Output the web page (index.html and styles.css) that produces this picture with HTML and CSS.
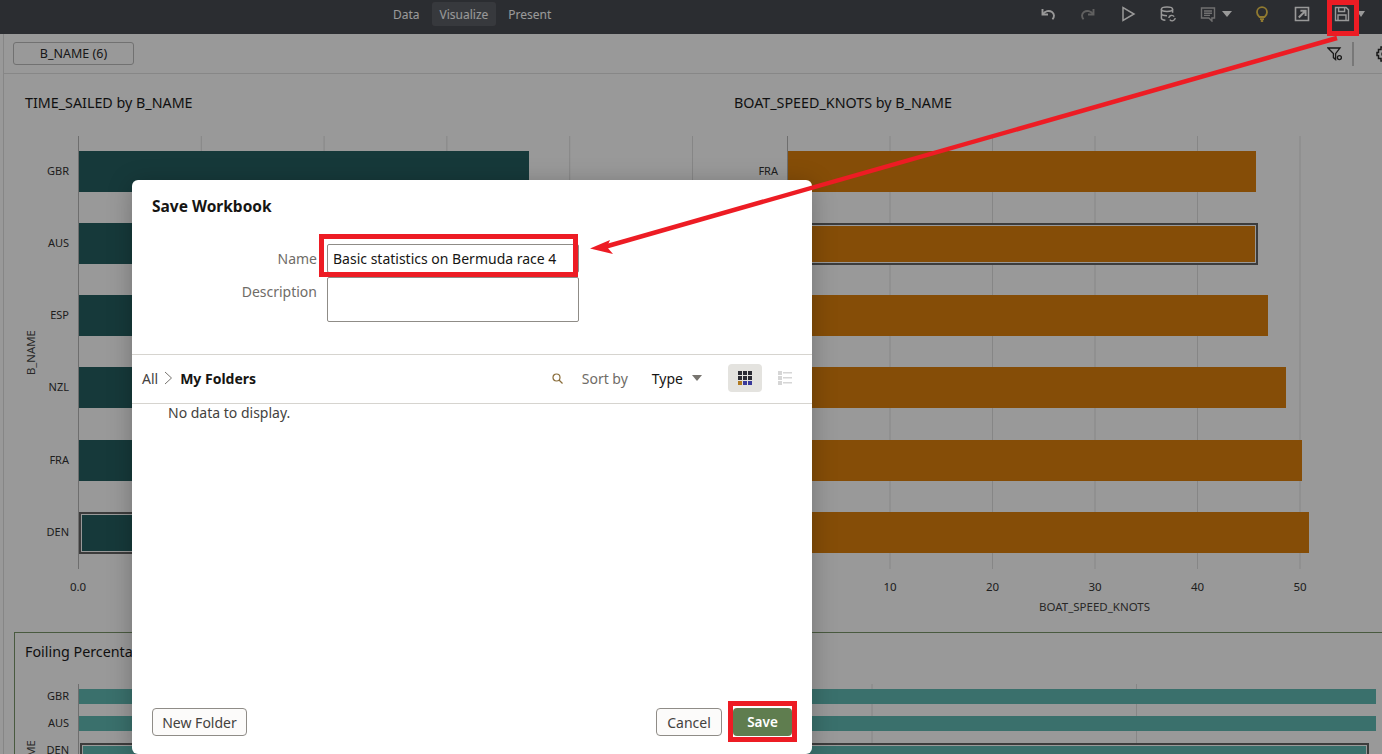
FILE: index.html
```html
<!DOCTYPE html>
<html lang="en">

<head>
    <meta charset="UTF-8">
    <meta name="viewport" content="width=device-width, initial-scale=1.0">
    <title>Save Workbook</title>
    <link rel="stylesheet" href="styles.css">
</head>

<body>
    <header class="topbar">
        <nav class="tabs">
            <a class="tab">Data</a>
            <a class="tab tab-active">Visualize</a>
            <a class="tab">Present</a>
        </nav>
        <div class="tools">
            <span class="tool">
                <svg width="16" height="16" viewBox="0 0 16 16" fill="none" stroke="currentColor" stroke-width="1.9"><path d="M2.500 3v5.500H8"/><path d="M2.800 8.300C5 5 9 4 12 6c2.600 2 2.500 5.300.4 7.200"/></svg>
            </span>
            <span class="tool tool-off">
                <svg width="16" height="16" viewBox="0 0 16 16" fill="none" stroke="currentColor" stroke-width="1.9"><path d="M13.500 3v5.500H8"/><path d="M13.200 8.300C11 5 7 4 4 6c-2.600 2-2.500 5.300-.4 7.200"/></svg>
            </span>
            <span class="tool">
                <svg width="16" height="16" viewBox="0 0 16 16" fill="none" stroke="currentColor" stroke-width="1.500"><path d="M3 1.500v13L14 8z"/></svg>
            </span>
            <span class="tool">
                <svg width="16" height="16" viewBox="0 0 16 16" fill="none" stroke="currentColor" stroke-width="1.500"><ellipse cx="7" cy="3.200" rx="5.600" ry="2.200"/><path d="M1.400 3.200v9c0 1 1.600 1.800 4 2M12.600 3.200v3.600M1.400 7.600c0 1.200 2.400 2.200 5.600 2.200"/><path d="M8.800 12a3 3 0 0 1 5.400-1.400M15.200 12a3 3 0 0 1-5.400 1.600" stroke-width="1.400"/></svg>
            </span>
            <span class="tool tool-menu tool-dim">
                <svg width="16" height="16" viewBox="0 0 16 16" fill="none" stroke="currentColor" stroke-width="1.400"><path d="M1.500 2h13v10h-2.600v3l-3-3H1.500z"/><path d="M4 5h8M4 7.200h8M4 9.400h6"/></svg>
                <i class="caret"></i>
            </span>
            <span class="tool tool-bulb">
                <svg width="16" height="16" viewBox="0 0 16 16" fill="none" stroke="currentColor" stroke-width="1.800"><path d="M5.600 11C4.600 9.800 3 8.800 3 6.200a5 5 0 0 1 10 0c0 2.600-1.600 3.600-2.600 4.800z"/><path d="M6 13.200h4M6.800 15h2.400"/></svg>
            </span>
            <span class="tool">
                <svg width="16" height="16" viewBox="0 0 16 16" fill="none" stroke="currentColor" stroke-width="1.600"><path d="M1.500 1.500h13v13h-13z"/><path d="M4.800 11.500 10.800 5.500M6.400 4.800h5.200v5.200" stroke-width="2"/></svg>
            </span>
            <span class="tool tool-menu tool-save">
                <svg width="16" height="16" viewBox="0 0 16 16" fill="none" stroke="currentColor" stroke-width="1.400"><path d="M1.500 1.500h10.600l2.400 2.400v10.600h-13z"/><path d="M4.600 1.500v4h6v-4M4 14.500V9h8v5.500"/></svg>
                <i class="caret"></i>
            </span>
        </div>
    </header>

    <div class="workspace">
        <div class="filterbar">
            <button class="chip">B_NAME (6)</button>
            <div class="filter-tools">
                <svg class="filter-icon" width="16" height="16" viewBox="0 0 16 16" fill="none" stroke="currentColor" stroke-width="1.300"><path d="M1 2h12L8.600 7.600v6L6.400 11.600V7.600z"/><circle cx="12.400" cy="11.600" r="2"/></svg>
                <span class="filter-sep"></span>
                <svg class="gear-icon" width="16" height="16" viewBox="0 0 16 16" fill="none" stroke="currentColor" stroke-width="1.500"><path d="M5 1h6v2.500h2.500v3H15v3h-1.500v3H11V15H5v-2.500H2.500v-3H1v-3h1.500v-3H5z"/><circle cx="8" cy="8" r="2"/></svg>
            </div>
        </div>

        <div class="charts">
            <section class="chart">
                <h2 class="chart-title">TIME_SAILED by B_NAME</h2>
                <div class="chart-grid">
                    <div class="y-title">B_NAME</div>
                    <div class="y-labels">
                        <span>GBR</span>
                        <span>AUS</span>
                        <span>ESP</span>
                        <span>NZL</span>
                        <span>FRA</span>
                        <span>DEN</span>
                    </div>
                    <div class="plot plot-time">
                        <div class="bar bar-time" style="width: 450px"></div>
                        <div class="bar bar-time" style="width: 450px"></div>
                        <div class="bar bar-time" style="width: 450px"></div>
                        <div class="bar bar-time" style="width: 450px"></div>
                        <div class="bar bar-time" style="width: 450px"></div>
                        <div class="bar bar-time bar-selected" style="width: 450px"></div>
                    </div>
                    <div class="x-ticks ticks-time"><span>0.0</span></div>
                </div>
            </section>

            <section class="chart">
                <h2 class="chart-title">BOAT_SPEED_KNOTS by B_NAME</h2>
                <div class="chart-grid">
                    <div class="y-title">B_NAME</div>
                    <div class="y-labels">
                        <span>FRA</span>
                        <span></span>
                        <span></span>
                        <span></span>
                        <span></span>
                        <span></span>
                    </div>
                    <div class="plot plot-speed">
                        <div class="bar bar-speed" style="width: 468px"></div>
                        <div class="bar bar-speed bar-selected" style="width: 470px"></div>
                        <div class="bar bar-speed" style="width: 480px"></div>
                        <div class="bar bar-speed" style="width: 498px"></div>
                        <div class="bar bar-speed" style="width: 514px"></div>
                        <div class="bar bar-speed" style="width: 521px"></div>
                    </div>
                    <div class="x-ticks ticks-speed">
                        <span>10</span>
                        <span>20</span>
                        <span>30</span>
                        <span>40</span>
                        <span>50</span>
                    </div>
                    <div class="x-title">BOAT_SPEED_KNOTS</div>
                </div>
            </section>
        </div>

        <section class="panel">
            <h2 class="chart-title">Foiling Percentage</h2>
            <div class="chart-grid panel-grid">
                <div class="y-title">B_NAME</div>
                <div class="y-labels">
                    <span>GBR</span>
                    <span>AUS</span>
                    <span>DEN</span>
                </div>
                <div class="plot plot-foiling">
                    <div class="bar bar-foiling" style="width: 1297px"></div>
                    <div class="bar bar-foiling" style="width: 1297px"></div>
                    <div class="bar bar-foiling bar-selected" style="width: 1289px"></div>
                </div>
            </div>
        </section>
    </div>

    <div class="scrim"></div>

    <div class="modal">
        <h1 class="modal-title">Save Workbook</h1>

        <form class="save-form">
            <label for="wbName">Name</label>
            <input type="text" id="wbName" value="Basic statistics on Bermuda race 4">
            <label for="wbDesc">Description</label>
            <textarea id="wbDesc"></textarea>
        </form>

        <div class="folderbar">
            <span class="crumb">All</span>
            <svg class="crumb-sep" width="9" height="14" viewBox="0 0 9 14" fill="none" stroke="currentColor"><path d="M1 1l6.500 6L1 13"/></svg>
            <span class="crumb-current">My Folders</span>
            <svg class="search-icon" width="11" height="11" viewBox="0 0 11 11" fill="none" stroke="currentColor" stroke-width="1.200"><circle cx="4.500" cy="4.500" r="3.500"/><path d="M7 7l3.500 3.500"/></svg>
            <span class="sort-label">Sort by</span>
            <span class="sort-value">Type</span>
            <i class="sort-caret"></i>
            <span class="view-btn view-active">
                <svg width="14" height="14" viewBox="0 0 14 14">
                    <path fill="#2b2b33" d="M0 0h14v14H0z"/>
                    <path fill="#e4e3df" d="M4 0h1v14H4zM9 0h1v14H9zM0 4h14v1H0zM0 9h14v1H0z"/>
                    <path fill="#b07a20" d="M0 10h4v4H0z"/>
                    <path fill="#3a3a9a" d="M5 10h4v4H5zM10 10h4v4h-4z"/>
                </svg>
            </span>
            <span class="view-btn">
                <svg width="14" height="14" viewBox="0 0 14 14" fill="#d6d6d6"><path d="M0 0h4v4H0zM0 5h4v4H0zM0 10h4v4H0zM5 1h9v1.500H5zM5 6h9v1.500H5zM5 11h9v1.500H5z"/></svg>
            </span>
        </div>

        <div class="folder-list">No data to display.</div>

        <div class="modal-footer">
            <button class="btn btn-new">New Folder</button>
            <button class="btn btn-cancel">Cancel</button>
            <button class="btn btn-save">Save</button>
        </div>
    </div>

    <!-- callouts drawn over the screenshot -->
    <svg class="callouts" width="1382" height="754" viewBox="0 0 1382 754" fill="none" stroke="#ed1c24" stroke-width="5">
        <rect x="1329.500" y="2.500" width="27" height="31"/>
        <rect x="321.500" y="236.500" width="254" height="38"/>
        <rect x="730.500" y="703.500" width="64" height="36"/>
        <path d="M1337 38 606 246.500" stroke-width="4.500"/>
        <path d="M590 248.500 610 240 607 247 613 254z" fill="#ed1c24" stroke="none"/>
    </svg>
</body>

</html>
```

FILE: styles.css
```css
* {
    box-sizing: border-box;
}

body {
    font-family: 'Noto Sans', sans-serif;
    position: relative;
    width: 1382px;
    height: 754px;
    margin: 0;
    overflow: hidden;
    background-color: #fff;
    color: #1c1c1c;
}

.topbar {
    display: flex;
    height: 34px;
    padding-left: 385px;
    background-color: #494b52;
}

.tabs {
    display: flex;
    gap: 4px;
    height: 24px;
    margin-top: 2px;
}

.tab {
    padding: 0 8px;
    border-radius: 3px;
    font-size: 12px;
    line-height: 25px;
    color: #fff;
}

.tab-active {
    background-color: #5d5f66;
}

.tools {
    display: flex;
    margin-left: auto;
    padding-right: 16px;
    color: #fff;
}

.tool {
    display: flex;
    align-items: center;
    justify-content: center;
    width: 40px;
    height: 28px;
}

.tool-off {
    color: #a0a0a0;
}

.tool-dim {
    color: #bbb;
}

.tool-bulb {
    color: #f0cc50;
}

.tool-menu {
    justify-content: flex-start;
    gap: 6px;
    width: 54px;
    padding-left: 12px;
}

.tool-save {
    gap: 7px;
    width: 44px;
    color: #fff;
}

.caret {
    width: 0;
    height: 0;
    border-top: 6px solid #fff;
    border-left: 5px solid transparent;
    border-right: 5px solid transparent;
}

.tool-save .caret {
    border-left-width: 4.5px;
    border-right-width: 4.5px;
}

.workspace {
    margin-left: 3px;
    border-left: 1px solid #e0e0e0;
}

.filterbar {
    display: flex;
    align-items: center;
    justify-content: space-between;
    height: 40px;
    padding-left: 9px;
    border-bottom: 1px solid #e2e2e2;
}

.chip {
    width: 121px;
    height: 23px;
    border: 1px solid #bdbdbd;
    border-radius: 3px;
    background: transparent;
    font-family: inherit;
    font-size: 12.5px;
    color: #2a2a2a;
}

.filter-tools {
    display: flex;
    align-items: center;
    color: #2a2a2a;
}

.filter-sep {
    width: 2px;
    height: 24px;
    margin: 0 22px 0 9px;
    background-color: #c9c9c9;
}

.gear-icon {
    margin-right: -10px;
}

.charts {
    display: grid;
    grid-template-columns: 709px 1fr;
    padding: 20px 0 0 21px;
}

.chart {
    min-width: 0;
}

.chart-title {
    margin: 0 0 24px;
    font-size: 14.3px;
    font-weight: 400;
    line-height: 18px;
    white-space: nowrap;
}

.chart-grid {
    display: grid;
    grid-template-columns: 12px 32px 1fr;
    column-gap: 0;
}

.y-title {
    grid-row: 1;
    writing-mode: vertical-rl;
    transform: rotate(180deg);
    text-align: center;
    font-size: 11.3px;
    line-height: 12px;
    color: #444;
}

.y-labels {
    grid-row: 1;
    display: flex;
    flex-direction: column;
    gap: 31.15px;
    padding-top: 15px;
    font-size: 11px;
    text-align: right;
    color: #333;
}

.y-labels span {
    height: 41px;
    line-height: 39px;
}

.plot {
    grid-row: 1;
    display: flex;
    flex-direction: column;
    gap: 31.15px;
    height: 433px;
    margin-left: 9px;
    padding-top: 15px;
    border-left: 1px solid #b7b7b7;
    background-repeat: repeat-x;
}

.plot-time {
    width: 615px;
    background-image: linear-gradient(to right, transparent 121.800px, #e0e0e0 121.800px);
    background-size: 122.800px 100%;
}

.plot-speed {
    background-image: linear-gradient(to right, transparent 101.500px, #e0e0e0 101.500px);
    background-size: 102.500px 100%;
}

.bar {
    flex: none;
    height: 41px;
}

.bar-time {
    background-color: #265f62;
}

.bar-speed {
    background-color: #de800d;
}

.bar-foiling {
    background-color: #61bbb4;
}

.bar-selected {
    height: 42px;
    margin-bottom: -1px;
    border: 2px solid #646464;
    box-shadow: inset 0 0 0 1px #fff;
}

.x-ticks {
    grid-column: 3;
    display: flex;
    margin-top: 12px;
    font-size: 11.5px;
    line-height: 12px;
    text-align: center;
    color: #333;
}

.ticks-time {
    margin-left: -11px;
}

.ticks-time span {
    width: 40px;
}

.ticks-speed {
    margin-left: 60.750px;
}

.ticks-speed span {
    width: 102.500px;
}

.x-title {
    grid-column: 3;
    width: 615px;
    margin: 8px 0 0 9px;
    font-size: 11.5px;
    line-height: 12px;
    text-align: center;
    color: #444;
}

.panel {
    margin: 19px 0 0 10px;
    padding: 10px 0 0 10px;
    border-top: 1px solid #7b9669;
    border-left: 1px solid #7b9669;
}

.panel .chart-title {
    margin-bottom: 23px;
}

.panel-grid .y-labels {
    gap: 12px;
    padding-top: 5px;
}

.panel-grid .y-labels span {
    height: 15px;
    line-height: 13px;
}

.plot-foiling {
    gap: 12px;
    height: 158px;
    padding-top: 5px;
    background-image: linear-gradient(to right, transparent 263.500px, #e0e0e0 263.500px);
    background-size: 264.500px 100%;
}

.plot-foiling .bar {
    height: 15px;
}

.plot-foiling .bar-selected {
    height: 24px;
    margin-left: 1px;
}

.scrim {
    position: absolute;
    top: 0;
    left: 0;
    width: 100%;
    height: 100%;
    background-color: rgba(0, 0, 0, 0.4);
}

.modal {
    position: absolute;
    top: 180px;
    left: 132px;
    display: flex;
    flex-direction: column;
    width: 680px;
    height: 574px;
    border-radius: 6px;
    background: white;
    box-shadow: 0 4px 24px rgba(0, 0, 0, 0.25);
}

.modal-title {
    margin: 16px 0 0 20px;
    font-size: 15.5px;
    font-weight: 700;
    line-height: 20px;
    color: #161513;
}

.save-form {
    display: grid;
    grid-template-columns: 165px 252px;
    column-gap: 10px;
    row-gap: 4px;
    margin: 28px 0 32px 20px;
}

.save-form label {
    padding-top: 6px;
    font-size: 14px;
    line-height: 18px;
    text-align: right;
    color: #6f6c67;
}

.save-form input,
.save-form textarea {
    display: block;
    width: 252px;
    margin: 0;
    padding: 0 5px;
    border: 1px solid #8f8c87;
    border-radius: 2px;
    background: white;
    font-family: inherit;
    font-size: 14px;
    color: #161513;
    resize: none;
}

.save-form input {
    height: 29px;
}

.save-form textarea {
    height: 45px;
}

.folderbar {
    display: flex;
    flex: none;
    align-items: center;
    height: 50px;
    padding-left: 10px;
    padding-bottom: 2px;
    border-top: 1px solid #d6d4cf;
    border-bottom: 1px solid #d6d4cf;
    font-size: 14px;
}

.crumb {
    color: #44423e;
}

.crumb-sep {
    margin: 0 7px 0 6px;
    color: #77746f;
}

.crumb-current {
    font-weight: 700;
    color: #161513;
}

.search-icon {
    margin-left: auto;
    color: #8a6d3a;
}

.sort-label {
    margin-left: 19px;
    color: #6f6c67;
}

.sort-value {
    margin-left: 24px;
    color: #161513;
}

.sort-caret {
    width: 0;
    height: 0;
    margin-left: 9px;
    border-top: 6px solid #77746f;
    border-left: 5px solid transparent;
    border-right: 5px solid transparent;
}

.view-btn {
    display: flex;
    align-items: center;
    justify-content: center;
    width: 34px;
    height: 28px;
    border-radius: 4px;
}

.view-active {
    margin-left: 26px;
    background-color: #e4e3df;
}

.view-btn:last-child {
    margin: 0 10px 0 6px;
}

.folder-list {
    flex: 1;
    padding-left: 36px;
    font-size: 14px;
    line-height: 18px;
    color: #44423e;
}

.modal-footer {
    display: flex;
    gap: 11px;
    padding: 0 20px 18px;
}

.btn {
    height: 28px;
    padding: 0;
    border: 1px solid #8f8c87;
    border-radius: 4px;
    background-color: #fcfbfa;
    font-family: inherit;
    font-size: 14px;
    white-space: nowrap;
    color: #44423e;
}

.btn-new {
    width: 95px;
}

.btn-cancel {
    margin-left: auto;
    width: 66px;
}

.btn-save {
    width: 59px;
    border: none;
    background-color: #5f7d4f;
    font-size: 13.5px;
    font-weight: 600;
    color: white;
}

.callouts {
    position: absolute;
    top: 0;
    left: 0;
}
```
